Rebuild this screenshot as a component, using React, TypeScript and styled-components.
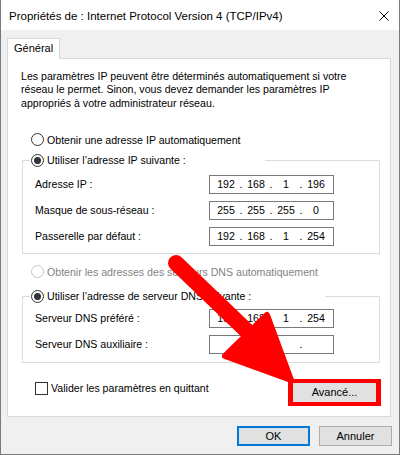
import React from 'react';
import styled, { createGlobalStyle } from 'styled-components';

const GlobalStyle = createGlobalStyle`
  html, body { margin: 0; padding: 0; background: #fff; }
  body {
    font-family: "Liberation Sans", Arial, sans-serif;
    font-size: 10.6px;
    color: #000;
  }
  *, *::before, *::after { box-sizing: border-box; }
`;

const Screen = styled.div`
  position: relative;
  width: 400px;
  height: 455px;
`;

const Window = styled.div`
  width: 400px;
  height: 455px;
  display: flex;
  flex-direction: column;
  border: 1px solid #7a7a7a;
  border-top: none;
  background: #f0f0f0;
  overflow: hidden;
`;

const TitleBar = styled.div`
  height: 30px;
  flex: none;
  background: #fff;
  display: flex;
  align-items: center;
  justify-content: space-between;
  padding: 1px 10px 0 8px;
  font-size: 11.5px;
`;

const Body = styled.div`
  flex: 1;
  display: flex;
  flex-direction: column;
  padding: 8px 7px 8px 6px;
`;

const TabStrip = styled.div`
  display: flex;
  height: 20px;
`;

const Tab = styled.div`
  position: relative;
  z-index: 1;
  width: 53px;
  height: 21px;
  border: 1px solid #d9d9d9;
  border-bottom: none;
  background: #fff;
  padding-left: 6px;
  line-height: 19px;
  font-size: 11px;
`;

const Panel = styled.div`
  height: 359px;
  margin-right: 1px;
  border: 1px solid #d9d9d9;
  background: #fff;
  display: flex;
  flex-direction: column;
  padding: 11px 9px 0 13px;
`;

const Description = styled.p`
  margin: 0;
  line-height: 13.3px;
  white-space: pre-line;
`;

const OptionRow = styled.label<{ $top: number; $disabled?: boolean }>`
  display: flex;
  align-items: center;
  height: 14px;
  line-height: 14px;
  margin: ${p => p.$top}px 0 0 10px;
  gap: 3px;
  color: ${p => (p.$disabled ? '#838383' : '#000')};
`;

const RadioCircle = styled.span<{ $checked?: boolean; $disabled?: boolean }>`
  width: 13px;
  height: 13px;
  flex: none;
  border-radius: 50%;
  border: 1px solid ${p => (p.$disabled ? '#c4c4c4' : '#333')};
  background: #fff;
  display: flex;
  align-items: center;
  justify-content: center;
  &::after {
    content: '';
    width: 7px;
    height: 7px;
    border-radius: 50%;
    background: #333;
    display: ${p => (p.$checked ? 'block' : 'none')};
  }
`;

const Group = styled.fieldset<{ $top: number; $bottom: number; $padTop: number }>`
  margin: ${p => p.$top}px 1px 0 1px;
  padding: ${p => p.$padTop}px 45px ${p => p.$bottom}px 12px;
  border: 1px solid #dcdcdc;
  display: flex;
  flex-direction: column;
  gap: 7px;
  min-width: 0;
`;

const Legend = styled.legend<{ $width: number }>`
  margin-left: -5px;
  padding: 0;
  width: ${p => p.$width}px;
  height: 13px;
  line-height: 13px;
  display: flex;
  align-items: center;
  gap: 3px;
  & > span:first-child { margin-left: 1px; }
`;

const FieldRow = styled.div`
  display: flex;
  align-items: center;
  height: 19px;
`;

const FieldLabel = styled.span`
  flex: 1;
`;

const IpBox = styled.div`
  width: 125px;
  height: 19px;
  flex: none;
  border: 1px solid #7a7a7a;
  background: #fff;
  display: flex;
  align-items: center;
  padding-left: 3px;
`;

const Octet = styled.span`
  width: 26px;
  text-align: center;
`;

const Dot = styled.span`
  width: 4px;
  text-align: center;
`;

const BottomRow = styled.div`
  display: flex;
  align-items: flex-start;
  margin-top: 16px;
`;

const CheckRow = styled.label`
  display: flex;
  align-items: center;
  gap: 3px;
  margin: 3px 0 0 14px;
  height: 13px;
  line-height: 13px;
`;

const CheckBox = styled.span`
  width: 13px;
  height: 13px;
  border: 1px solid #333;
  background: #fff;
  flex: none;
`;

const Highlight = styled.div`
  margin-left: auto;
  border-style: solid;
  border-color: #ff0000;
  border-width: 4px 5px;
`;

const Button = styled.button<{ $default?: boolean; $w: number; $h: number }>`
  width: ${p => p.$w}px;
  height: ${p => p.$h}px;
  margin: 0;
  padding: 0;
  font: inherit;
  font-size: 11px;
  color: #000;
  background: #e1e1e1;
  border: ${p => (p.$default ? '2px solid #0078d7' : '1px solid #adadad')};
  display: flex;
  align-items: center;
  justify-content: center;
`;

const FlatButton = styled(Button)`
  border: none;
`;

const Footer = styled.div`
  display: flex;
  justify-content: flex-end;
  gap: 9px;
  margin-top: 9px;
`;

const Overlay = styled.svg`
  position: absolute;
  left: 0;
  top: 0;
  pointer-events: none;
`;

function Ip({ parts }: { parts: string[] }) {
  return (
    <IpBox>
      <Octet>{parts[0]}</Octet>
      <Dot>.</Dot>
      <Octet>{parts[1]}</Octet>
      <Dot>.</Dot>
      <Octet>{parts[2]}</Octet>
      <Dot>.</Dot>
      <Octet>{parts[3]}</Octet>
    </IpBox>
  );
}

export default function App() {
  return (
    <Screen>
      <GlobalStyle />
      <Window>
        <TitleBar>
          <span>Propriétés de : Internet Protocol Version 4 (TCP/IPv4)</span>
          <svg width="10" height="10" viewBox="0 0 10 10">
            <path d="M0.5 0.5 L9.5 9.5 M9.5 0.5 L0.5 9.5" stroke="#000" strokeWidth="1" />
          </svg>
        </TitleBar>
        <Body>
          <TabStrip>
            <Tab>Général</Tab>
          </TabStrip>
          <Panel>
            <Description>
              {'Les paramètres IP peuvent être déterminés automatiquement si votre\nréseau le permet. Sinon, vous devez demander les paramètres IP\nappropriés à votre administrateur réseau.'}
            </Description>
            <OptionRow $top={23}>
              <RadioCircle />
              Obtenir une adresse IP automatiquement
            </OptionRow>
            <Group $top={7} $padTop={8} $bottom={7}>
              <Legend $width={235}>
                <RadioCircle $checked />
                <span>Utiliser l’adresse IP suivante :</span>
              </Legend>
              <FieldRow>
                <FieldLabel>Adresse IP :</FieldLabel>
                <Ip parts={['192', '168', '1', '196']} />
              </FieldRow>
              <FieldRow>
                <FieldLabel>Masque de sous-réseau :</FieldLabel>
                <Ip parts={['255', '255', '255', '0']} />
              </FieldRow>
              <FieldRow>
                <FieldLabel>Passerelle par défaut :</FieldLabel>
                <Ip parts={['192', '168', '1', '254']} />
              </FieldRow>
            </Group>
            <OptionRow $top={11} $disabled>
              <RadioCircle $disabled />
              Obtenir les adresses des serveurs DNS automatiquement
            </OptionRow>
            <Group $top={11} $padTop={6} $bottom={8}>
              <Legend $width={295}>
                <RadioCircle $checked />
                <span>Utiliser l’adresse de serveur DNS suivante :</span>
              </Legend>
              <FieldRow>
                <FieldLabel>Serveur DNS préféré :</FieldLabel>
                <Ip parts={['192', '168', '1', '254']} />
              </FieldRow>
              <FieldRow>
                <FieldLabel>Serveur DNS auxiliaire :</FieldLabel>
                <Ip parts={['', '', '', '']} />
              </FieldRow>
            </Group>
            <BottomRow>
              <CheckRow>
                <CheckBox />
                Valider les paramètres en quittant
              </CheckRow>
              <Highlight>
                <FlatButton $w={83} $h={19}>Avancé...</FlatButton>
              </Highlight>
            </BottomRow>
          </Panel>
          <Footer>
            <Button $default $w={73} $h={20}>OK</Button>
            <Button $w={73} $h={20}>Annuler</Button>
          </Footer>
        </Body>
      </Window>
      <Overlay width="400" height="455" viewBox="0 0 400 455">
        <line x1="176" y1="263" x2="248" y2="332" stroke="#ff0000" strokeWidth="16" strokeLinecap="round" />
        <polygon
          points="225,356 267,315 291,380"
          fill="#ff0000"
          stroke="#ff0000"
          strokeWidth="6"
          strokeLinejoin="round"
        />
      </Overlay>
    </Screen>
  );
}
